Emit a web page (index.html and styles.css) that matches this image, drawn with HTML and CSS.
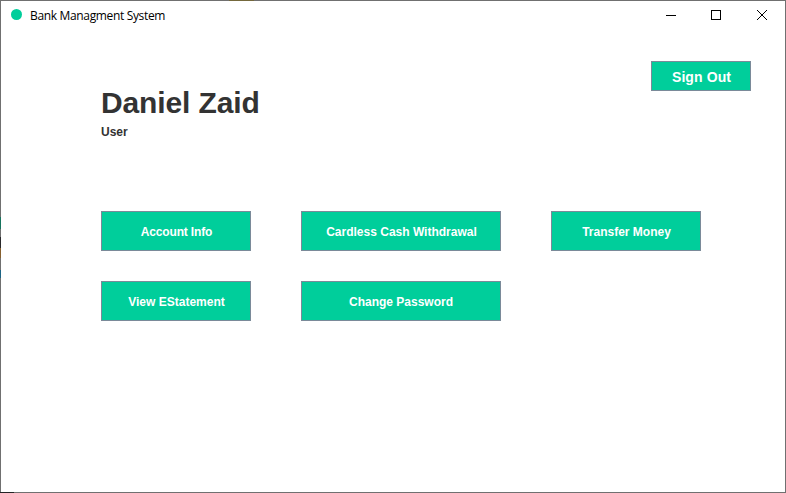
FILE: index.html
```html
<!DOCTYPE html>
<html lang="en">
<head>
<meta charset="utf-8">
<title>Bank Managment System</title>
<link rel="stylesheet" href="styles.css">
</head>
<body>
<div class="window">
  <header class="titlebar">
    <span class="app-icon"></span>
    <span class="title">Bank Managment System</span>
    <div class="controls">
      <svg class="control" viewBox="0 0 10 10" shape-rendering="crispEdges"><path d="M0 5.5H10"/></svg>
      <svg class="control" viewBox="0 0 10 10" shape-rendering="crispEdges"><path d="M.5 .5H9.5V9.5H.5Z"/></svg>
      <svg class="control close" viewBox="0 0 10 10"><path d="M0 0L10 10M10 0L0 10"/></svg>
    </div>
  </header>
  <main class="content">
    <section class="profile">
      <div>
        <h1 class="name">Daniel Zaid</h1>
        <p class="role">User</p>
      </div>
      <button class="button sign-out">Sign Out</button>
    </section>
    <nav class="actions">
      <button class="button account">Account Info</button>
      <button class="button">Cardless Cash Withdrawal</button>
      <button class="button">Transfer Money</button>
      <button class="button">View EStatement</button>
      <button class="button password">Change Password</button>
    </nav>
  </main>
</div>
</body>
</html>
```
FILE: styles.css
```css
* { box-sizing: border-box; }
body { margin: 0; background: #fff; font-family: "Liberation Sans", Arial, sans-serif; }
.window {
  width: 786px;
  height: 493px;
  padding: 1px;
  overflow: hidden;
  background:
    linear-gradient(90deg, transparent 229px, #74683c 229px 254px, transparent 254px) 0 0 / 100% 1px no-repeat,
    linear-gradient(90deg, #242426 14px, transparent 14px) 0 100% / 100% 1px no-repeat,
    linear-gradient(transparent 217px, #17745e 217px 229px, transparent 229px 237px, #29292b 237px 248px, #86602f 248px 258px, transparent 258px 270px, #1d6484 270px 278px, transparent 278px) 0 0 / 1px 100% no-repeat,
    #707070;
}
.titlebar {
  display: flex;
  align-items: center;
  height: 30px;
  padding: 0 18px 0 10px;
  background: #fff;
}
.app-icon { width: 11px; height: 11px; margin: -3px 8px 0 0; border-radius: 50%; background: #00ce9b; }
.title { font: 12px/16px "Open Sans", "Noto Sans", sans-serif; letter-spacing: -0.34px; color: #000; }
.controls { display: flex; gap: 35px; margin: -2px 0 0 auto; }
.control { width: 10px; height: 10px; overflow: visible; fill: none; stroke: #000; stroke-width: 1; }
.close { margin-left: 1px; }
.content { height: 461px; padding: 30px 34px 0 100px; background: #fff; }
.profile { display: flex; justify-content: space-between; height: 150px; }
.name { margin: 24px 0 0; font-size: 30px; line-height: 36px; letter-spacing: -0.12px; color: #333; }
.role { margin: 4px 0 0; font-size: 12px; line-height: 14px; font-weight: bold; color: #333; }
.actions { display: grid; grid-template-columns: 150px 200px 150px; grid-auto-rows: 40px; gap: 30px 50px; }
.button {
  margin: 0;
  padding: 1px 0 0 1px;
  border: 1px solid #7a8a99;
  background: #00ce9b;
  color: #fff;
  font: bold 12px/14px "Liberation Sans", Arial, sans-serif;
  white-space: nowrap;
}
.account { letter-spacing: -0.15px; }
.password { padding-left: 0; }
.sign-out { width: 100px; height: 30px; font-size: 14px; line-height: 16px; letter-spacing: 0.1px; }
```
